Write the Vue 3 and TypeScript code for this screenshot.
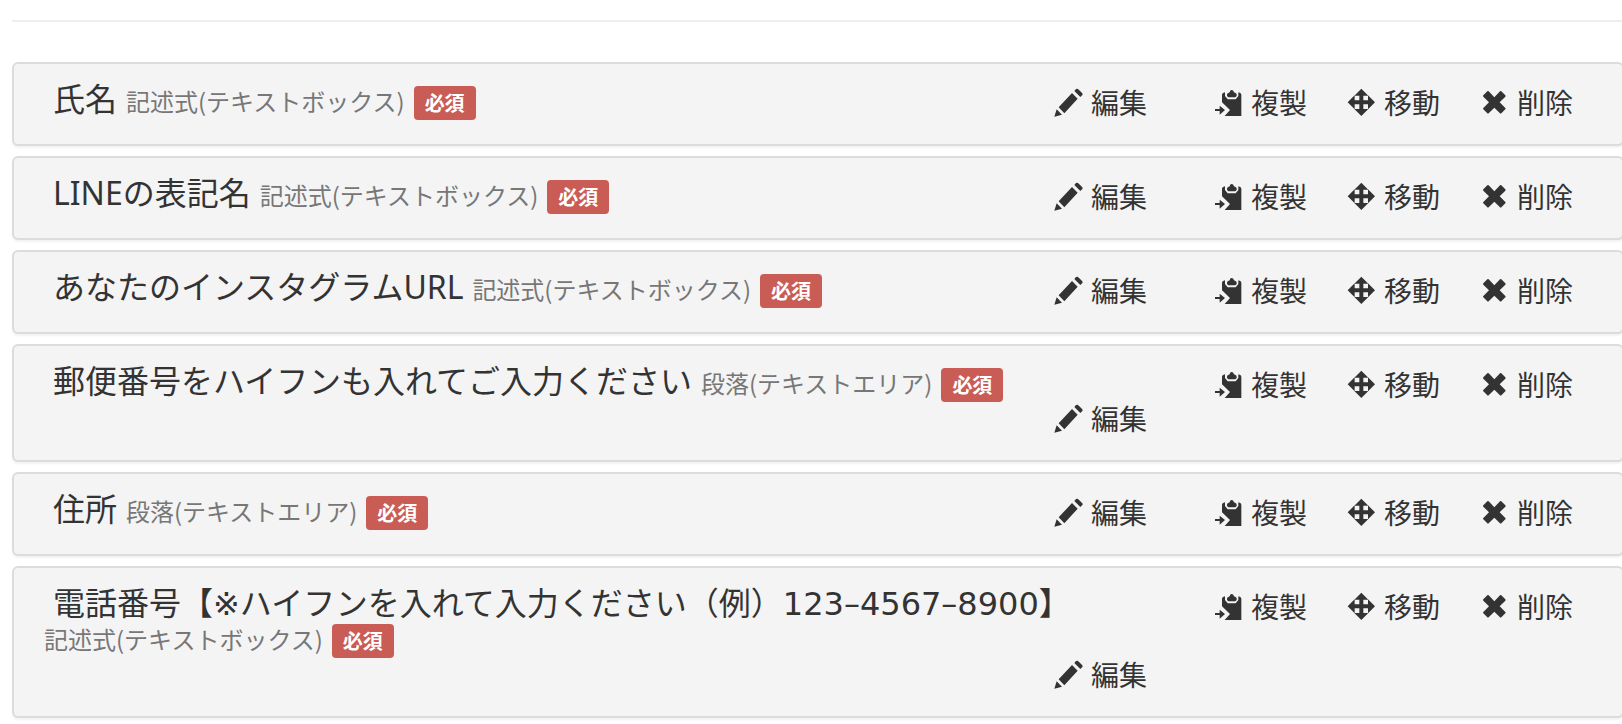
<script setup lang="ts">
interface Field {
  title: string
  type: string
  numeric?: boolean
}

const textBox = '記述式(テキストボックス)'
const textArea = '段落(テキストエリア)'

const fields: Field[] = [
  { title: '氏名', type: textBox },
  { title: 'LINEの表記名', type: textBox },
  { title: 'あなたのインスタグラムURL', type: textBox },
  { title: '郵便番号をハイフンも入れてご入力ください', type: textArea },
  { title: '住所', type: textArea },
  { title: '電話番号【※ハイフンを入れて入力ください（例）123–4567–8900】', type: textBox, numeric: true },
]

const icons = {
  edit: 'M1 86 8 64 24 80ZM14 58 54 15 71 32 31 76ZM61 9 66 3Q69 1 72 3L85 16Q87 19 85 21L79 27Z',
  copy: 'M24 20Q24 15 29 14L33 13V24L41 34H65L73 24V13L77 14Q82 15 82 20V84H32L48 66 24 43ZM39 24V20Q39 15 44 14L47 13Q48 6 53 6T60 13L63 14Q68 15 68 20V24L64 28H43ZM3 63H17V53L33 66 17 80V69H3Z',
  move: 'M43 2 64 23H49V37H63V22L84 43 63 64V49H49V63H64L43 84 22 63H37V49H23V64L2 43 23 22V37H37V23H22Z',
  remove: 'M10 22 22 10Q24 8 26 10L43 28 60 10Q62 8 64 10L76 22Q78 24 76 26L59 43 76 60Q78 62 76 64L64 76Q62 78 60 76L43 59 26 76Q24 78 22 76L10 64Q8 62 10 60L27 43 10 26Q8 24 10 22Z',
}

const tools = [
  { label: '複製', icon: icons.copy },
  { label: '移動', icon: icons.move },
  { label: '削除', icon: icons.remove },
]
</script>

<template>
  <main class="page">
    <hr class="divider" />
    <ul class="fields">
      <li v-for="field in fields" :key="field.title" class="card">
        <div class="main">
          <div class="heading">
            <span class="title" :class="{ numeric: field.numeric }">{{ field.title }}</span>
            {{ ' ' }}<span class="type">{{ field.type }}</span>
            {{ ' ' }}<span class="badge">必須</span>
          </div>
          <button type="button" class="action edit">
            <svg class="icon" viewBox="0 0 87 87" aria-hidden="true"><path :d="icons.edit" /></svg>
            <span>編集</span>
          </button>
        </div>
        <div class="tools">
          <button v-for="tool in tools" :key="tool.label" type="button" class="action">
            <svg class="icon" viewBox="0 0 87 87" aria-hidden="true"><path :d="tool.icon" /></svg>
            <span>{{ tool.label }}</span>
          </button>
        </div>
      </li>
    </ul>
  </main>
</template>

<style>
body {
  background: #fff;
  overflow-x: hidden;
}
</style>

<style scoped>
.page {
  padding: 20px 0 4px 12px;
  color: #333;
  font-family: "DejaVu Sans", "Noto Sans CJK JP", sans-serif;
  font-size: 28px;
  line-height: 34px;
}

.divider {
  margin: 0 0 40px;
  border: 0;
  border-top: 2px solid #eee;
}

.fields {
  display: flex;
  flex-direction: column;
  gap: 10px;
  margin: 0 -2px 0 0;
  padding: 0;
  list-style: none;
}

.card {
  display: flex;
  align-items: flex-start;
  gap: 67px;
  padding: 21px 49px 25px 30px;
  border: 2px solid #dcdcdc;
  border-radius: 6px;
  background: #f4f4f4;
  box-shadow: 0 2px 2px rgba(0, 0, 0, 0.05);
}

.main {
  display: flex;
  flex: 1;
  flex-wrap: wrap;
  align-items: flex-start;
  min-width: 0;
}

.heading {
  margin-right: 60px;
}

.title {
  margin-left: 9px;
  font-family: "Noto Sans", "Noto Sans CJK JP", sans-serif;
  font-size: 32px;
  line-height: 20px;
}

.title.numeric {
  font-family: "DejaVu Sans", "Noto Sans CJK JP", sans-serif;
}

.type {
  color: #777;
  font-family: "Noto Sans CJK JP", sans-serif;
  font-size: 24px;
  line-height: 20px;
  white-space: nowrap;
}

.badge {
  padding: 2px 11px 3px;
  border-radius: 4px;
  background: #c95c54;
  color: #fff;
  font-family: "Noto Sans CJK JP", sans-serif;
  font-size: 20px;
  font-weight: 700;
  line-height: 20px;
  white-space: nowrap;
}

.action {
  display: inline-flex;
  align-items: center;
  gap: 8px;
  padding: 0;
  border: 0;
  background: none;
  color: inherit;
  font: inherit;
  font-family: "Noto Sans CJK JP", sans-serif;
  white-space: nowrap;
  cursor: pointer;
}

.edit {
  margin-left: auto;
}

.tools {
  display: flex;
  gap: 40px;
}

.icon {
  width: 29px;
  height: 29px;
  fill: currentColor;
}
</style>
